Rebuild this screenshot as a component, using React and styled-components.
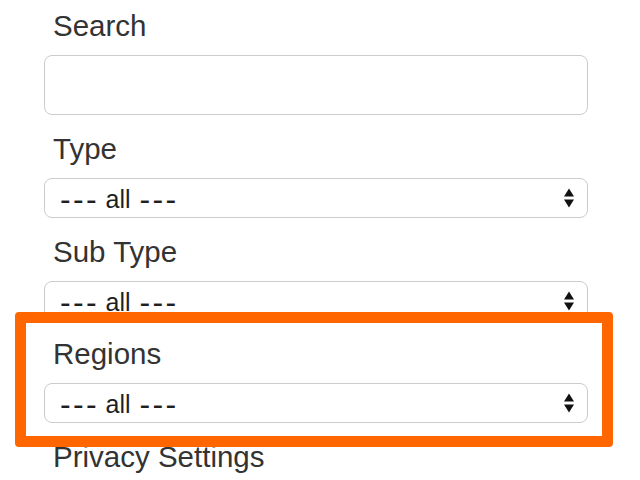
import React from "react";
import styled, { createGlobalStyle } from "styled-components";

const GlobalStyle = createGlobalStyle`
  html, body {
    margin: 0;
    padding: 0;
    background: #ffffff;
  }
  body {
    font-family: "Liberation Sans", Arial, Helvetica, sans-serif;
    overflow: hidden;
  }
`;

const Form = styled.form`
  display: flex;
  flex-direction: column;
  gap: 17px;
  width: 544px;
  padding: 9px 0 0 44px;
`;

const Field = styled.div`
  display: flex;
  flex-direction: column;
`;

const Label = styled.label`
  display: block;
  font-size: 29.5px;
  line-height: 34px;
  color: #333333;
  padding-left: 9px;
  margin-bottom: 12px;
`;

const TextInput = styled.input`
  box-sizing: border-box;
  width: 100%;
  height: 60px;
  border: 1px solid #cccccc;
  border-radius: 8px;
  background: #ffffff;
  padding: 0 16px;
  font-family: inherit;
  font-size: 24px;
  outline: none;
`;

const SelectBox = styled.div`
  box-sizing: border-box;
  display: flex;
  align-items: center;
  justify-content: space-between;
  height: 40px;
  border: 1px solid #cccccc;
  border-radius: 8px;
  background: #ffffff;
  padding: 2px 13px 0 15px;
  font-size: 25px;
  line-height: 30px;
  color: #1f1f1f;
  cursor: pointer;
`;

const Value = styled.span`
  white-space: pre;
  word-spacing: 2px;
`;

const Dashes = styled.span`
  font-size: 32px;
  line-height: 1;
  letter-spacing: 2.3px;
  margin-right: -2.3px;
  vertical-align: -2px;
`;

const Arrows = styled.svg`
  width: 10px;
  height: 20px;
  flex: none;
  margin-top: -2px;
`;

const Highlight = styled.div`
  position: relative;
  z-index: 1;
  background: #ffffff;
  border: 11px solid #ff6600;
  border-radius: 4px;
  margin: -26px -25px -24px -29px;
  padding: 14px 14px 13px 18px;
`;

function Select({ value }) {
  return (
    <SelectBox role="combobox" aria-expanded="false">
      <Value>
        <Dashes>---</Dashes> {value} <Dashes>---</Dashes>
      </Value>
      <Arrows viewBox="0 0 10 20" aria-hidden="true">
        <path d="M0 8.5 L5 0.5 L10 8.5 Z" fill="#111" />
        <path d="M0 11.5 L10 11.5 L5 19.5 Z" fill="#111" />
      </Arrows>
    </SelectBox>
  );
}

export default function App() {
  return (
    <>
      <GlobalStyle />
      <Form onSubmit={(e) => e.preventDefault()}>
        <Field>
          <Label htmlFor="search">Search</Label>
          <TextInput id="search" type="text" />
        </Field>
        <Field>
          <Label>Type</Label>
          <Select value="all" />
        </Field>
        <Field>
          <Label>Sub Type</Label>
          <Select value="all" />
        </Field>
        <Highlight>
          <Field>
            <Label>Regions</Label>
            <Select value="all" />
          </Field>
        </Highlight>
        <Field>
          <Label>Privacy Settings</Label>
        </Field>
      </Form>
    </>
  );
}
